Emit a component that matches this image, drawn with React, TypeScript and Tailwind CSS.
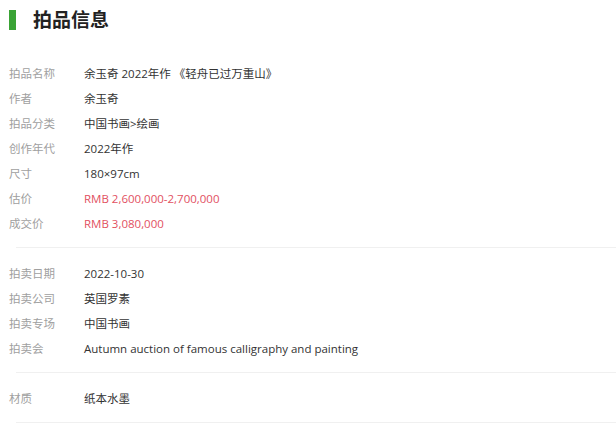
const groups: { label: string; value: string; red?: boolean }[][] = [
  [
    { label: '拍品名称', value: '余玉奇 2022年作 《轻舟已过万重山》' },
    { label: '作者', value: '余玉奇' },
    { label: '拍品分类', value: '中国书画>绘画' },
    { label: '创作年代', value: '2022年作' },
    { label: '尺寸', value: '180×97cm' },
    { label: '估价', value: 'RMB 2,600,000-2,700,000', red: true },
    { label: '成交价', value: 'RMB 3,080,000', red: true },
  ],
  [
    { label: '拍卖日期', value: '2022-10-30' },
    { label: '拍卖公司', value: '英国罗素' },
    { label: '拍卖专场', value: '中国书画' },
    { label: '拍卖会', value: 'Autumn auction of famous calligraphy and painting' },
  ],
  [{ label: '材质', value: '纸本水墨' }],
];

export default function App() {
  return (
    <div
      className="w-[616px] h-[428px] bg-white overflow-hidden"
      style={{ fontFamily: '"Open Sans", "Noto Sans CJK SC", sans-serif' }}
    >
      {/* Heading */}
      <div className="h-[48px] flex items-start pt-[10px] pl-[9px]">
        <div className="w-[7px] h-[20px] bg-[#3aa335]" />
        <h1 className="ml-[17px] text-[19px] leading-[20px] font-bold text-[#222]">拍品信息</h1>
      </div>

      {groups.map((rows, i) => (
        <div key={i}>
          <div className="pt-[13px] pb-[11px] pl-[9px]">
            {rows.map((r) => (
              <div key={r.label} className="flex items-center h-[25px] text-[11.5px]">
                <span className="w-[75px] shrink-0 text-[#a0a0a0]">{r.label}</span>
                <span className={r.red ? 'text-[#e2505f]' : 'text-[#333]'}>{r.value}</span>
              </div>
            ))}
          </div>
          <div className="ml-4 h-px bg-[#f0f0f0]" />
        </div>
      ))}
    </div>
  );
}
